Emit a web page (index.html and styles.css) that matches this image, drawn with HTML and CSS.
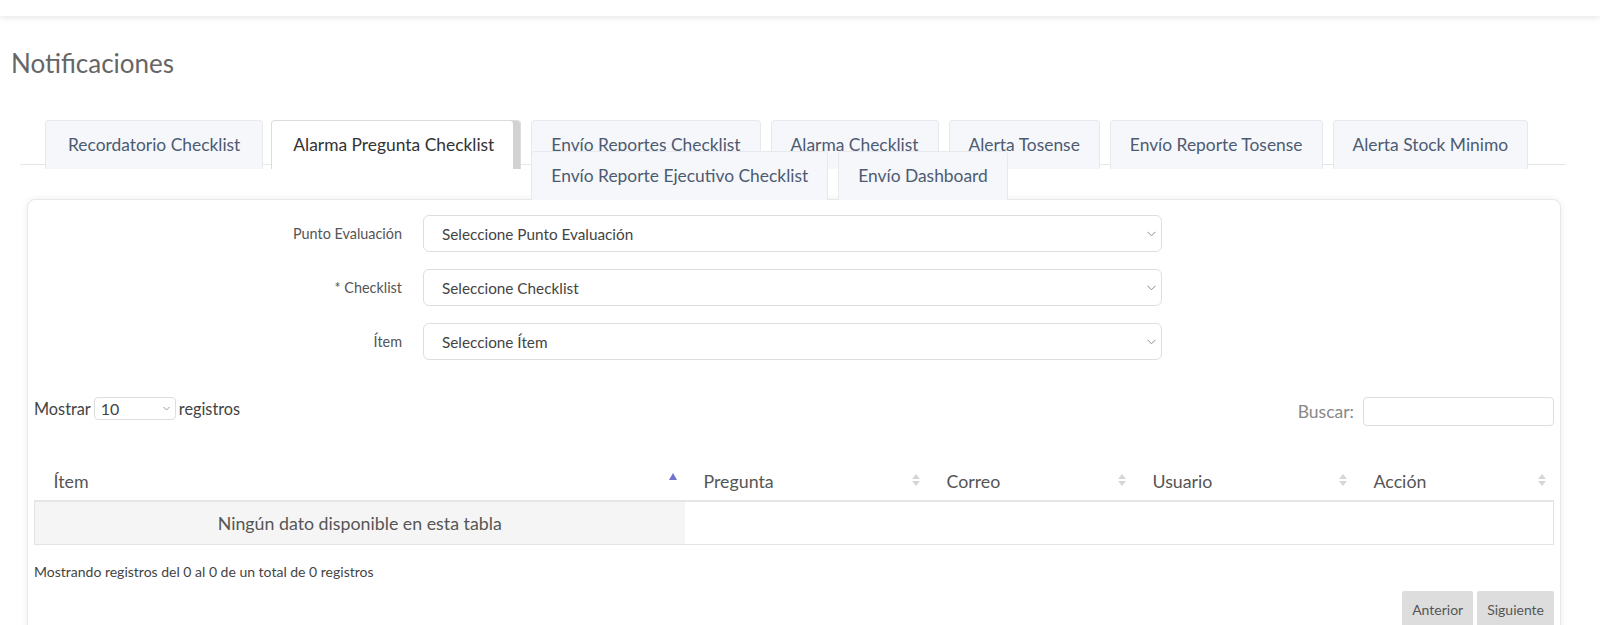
FILE: index.html
```html
<!DOCTYPE html>
<html lang="es">
<head>
  <meta charset="UTF-8">
  <title>Notificaciones</title>
  <link rel="stylesheet" href="styles.css">
</head>
<body>
  <header class="topbar"></header>
  <main class="page">
    <h1 class="page-title">Notificaciones</h1>

    <nav class="tabs">
      <a class="tab first" href="#">Recordatorio Checklist</a>
      <a class="tab active" href="#">Alarma Pregunta Checklist</a>
      <div class="tab-group">
        <a class="tab" href="#">Envío Reportes Checklist</a>
        <a class="tab" href="#">Alarma Checklist</a>
        <a class="tab" href="#">Alerta Tosense</a>
        <a class="tab" href="#">Envío Reporte Tosense</a>
        <a class="tab" href="#">Alerta Stock Minimo</a>
        <span class="tab-break"></span>
        <a class="tab" href="#">Envío Reporte Ejecutivo Checklist</a>
        <a class="tab" href="#">Envío Dashboard</a>
      </div>
    </nav>

    <section class="card">
      <div class="filters">
        <label>Punto Evaluación</label>
        <div class="select">
          <span>Seleccione Punto Evaluación</span>
          <svg class="chevron" width="9" height="6" viewBox="0 0 9 6"><path d="M0.5 0.8l4 4 4-4" fill="none" stroke="#8a8a8a" stroke-width="1"/></svg>
        </div>
        <label>* Checklist</label>
        <div class="select">
          <span>Seleccione Checklist</span>
          <svg class="chevron" width="9" height="6" viewBox="0 0 9 6"><path d="M0.5 0.8l4 4 4-4" fill="none" stroke="#8a8a8a" stroke-width="1"/></svg>
        </div>
        <label>Ítem</label>
        <div class="select">
          <span>Seleccione Ítem</span>
          <svg class="chevron" width="9" height="6" viewBox="0 0 9 6"><path d="M0.5 0.8l4 4 4-4" fill="none" stroke="#8a8a8a" stroke-width="1"/></svg>
        </div>
      </div>

      <div class="dt-top">
        <div class="dt-length">
          Mostrar
          <div class="select select-sm">
            <span>10</span>
            <svg class="chevron" width="7" height="5" viewBox="0 0 7 5"><path d="M0.5 1l3 3 3-3" fill="none" stroke="#8a8a8a" stroke-width="0.9"/></svg>
          </div>
          registros
        </div>
        <div class="dt-search">
          Buscar:
          <div class="search-box"></div>
        </div>
      </div>

      <table class="dt">
        <colgroup>
          <col class="w-item">
          <col class="w-preg">
          <col class="w-correo">
          <col class="w-user">
          <col>
        </colgroup>
        <thead>
          <tr>
            <th><span>Ítem</span><i class="sort asc"></i></th>
            <th><span>Pregunta</span><i class="sort"></i></th>
            <th><span>Correo</span><i class="sort"></i></th>
            <th><span>Usuario</span><i class="sort"></i></th>
            <th><span>Acción</span><i class="sort"></i></th>
          </tr>
        </thead>
        <tbody>
          <tr>
            <td class="empty">Ningún dato disponible en esta tabla</td>
            <td></td><td></td><td></td><td></td>
          </tr>
        </tbody>
      </table>

      <div class="dt-info">Mostrando registros del 0 al 0 de un total de 0 registros</div>

      <div class="dt-paginate">
        <a class="page-btn" href="#">Anterior</a>
        <a class="page-btn" href="#">Siguiente</a>
      </div>
    </section>
  </main>
</body>
</html>
```

FILE: styles.css
```css
body {
  margin: 0;
  font-family: Lato, "Open Sans", Arial, sans-serif;
  background: #fff;
  color: #555;
}
a {
  text-decoration: none;
}
.topbar {
  height: 16px;
  background: #fff;
  box-shadow: 0 2px 6px rgba(0, 0, 0, 0.09);
}
.page-title {
  margin: 32px 0 0 11px;
  font-size: 26px;
  font-weight: 400;
  line-height: 31px;
  color: #666;
}

/* Tabs */
.tabs {
  display: flex;
  align-items: flex-start;
  margin: 41px 34px 0 20px;
  padding-left: 25px;
  background: linear-gradient(#e4e6ea, #e4e6ea) no-repeat 0 44px / 100% 1px;
}
.tab {
  display: block;
  height: 49px;
  line-height: 48px;
  padding: 0 19px;
  margin-right: 10px;
  font-size: 17.4px;
  color: #4d5b72;
  background: #f5f7fa;
  border: 1px solid #e7e9ee;
  border-bottom: none;
  border-radius: 4px 4px 0 0;
  box-sizing: border-box;
  white-space: nowrap;
}
.tab.first {
  padding: 0 22px;
  margin-right: 8px;
}
.tab.active {
  background: #fff;
  color: #333;
  border-color: #dcdcdc;
  margin-right: 10px;
  padding: 0 26px 0 21px;
  box-shadow: inset -7px 0 0 #d2d2d2;
}
.tab-group {
  display: flex;
  flex-wrap: wrap;
  flex: 1;
}
.tab-group .tab {
  margin-bottom: -18px;
}
.tab-break {
  flex-basis: 100%;
  height: 0;
}

/* Card */
.card {
  margin: 17px 39px 0 27px;
  padding: 15px 6px 40px;
  background: #fff;
  border: 1px solid #e8e8e8;
  border-radius: 8px;
  box-shadow: 0 0 7px rgba(0, 0, 0, 0.07);
}
.filters {
  display: grid;
  grid-template-columns: 368px 739px;
  column-gap: 21px;
  row-gap: 17px;
  align-items: center;
}
.filters label {
  text-align: right;
  font-size: 14.4px;
  color: #555;
}
.select {
  display: flex;
  align-items: center;
  justify-content: space-between;
  height: 37px;
  padding: 0 5px 0 18px;
  border: 1px solid #dedede;
  border-radius: 6px;
  font-size: 15.3px;
  color: #444;
  box-sizing: border-box;
}
.chevron {
  display: block;
}

/* DataTable controls */
.dt-top {
  display: flex;
  justify-content: space-between;
  align-items: flex-start;
  margin-top: 37px;
}
.dt-length {
  display: flex;
  align-items: center;
  gap: 3px;
  font-size: 16.3px;
  color: #444;
}
.select-sm {
  width: 82px;
  height: 23px;
  padding: 0 5px 0 6px;
  border-radius: 4px;
  font-size: 16px;
}
.dt-search {
  display: flex;
  align-items: center;
  gap: 9px;
  font-size: 17.5px;
  color: #888;
}
.search-box {
  width: 191px;
  height: 29px;
  border: 1px solid #dedede;
  border-radius: 4px;
  box-sizing: border-box;
}

/* Table */
.dt {
  width: 100%;
  margin-top: 35px;
  border-collapse: collapse;
  table-layout: fixed;
}
.w-item { width: 650px; }
.w-preg { width: 243px; }
.w-correo { width: 206px; }
.w-user { width: 221px; }
.dt th {
  position: relative;
  height: 39px;
  padding: 0 24px 0 19px;
  text-align: left;
  font-size: 17.8px;
  font-weight: 400;
  color: #555;
  border-bottom: 2px solid #e6e6e6;
}
.sort {
  position: absolute;
  right: 8px;
  top: 13px;
  width: 0;
  height: 0;
  border-left: 4px solid transparent;
  border-right: 4px solid transparent;
  border-bottom: 5px solid #d6d6d6;
}
.sort::after {
  content: "";
  position: absolute;
  left: -4px;
  top: 7px;
  border-left: 4px solid transparent;
  border-right: 4px solid transparent;
  border-top: 5px solid #d6d6d6;
}
.sort.asc {
  top: 12px;
  border-bottom: 7px solid #6f73c9;
}
.sort.asc::after {
  display: none;
}
.dt tbody tr {
  border: 1px solid #e3e3e3;
}
.dt td {
  height: 42px;
  padding: 0;
}
.dt td.empty {
  background: #f5f5f5;
  text-align: center;
  font-size: 17.8px;
  color: #555;
}
.dt-info {
  margin-top: 18px;
  font-size: 14px;
  color: #444;
}
.dt-paginate {
  display: flex;
  justify-content: flex-end;
  gap: 4px;
  margin-top: 11px;
}
.page-btn {
  padding: 10px 10px;
  background: #ddd;
  color: #555;
  font-size: 14px;
  border-radius: 2px;
}
```
